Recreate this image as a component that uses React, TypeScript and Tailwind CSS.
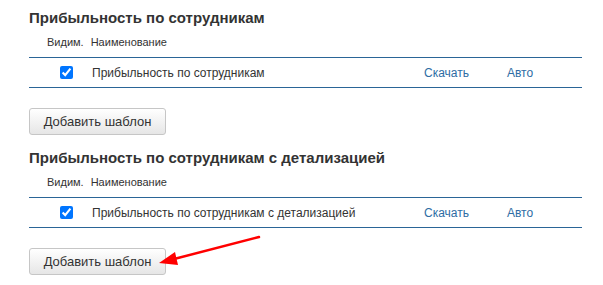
import React from "react";

function Section({ title, name, first }: { title: string; name: string; first?: boolean }) {
  return (
    <div className={first ? "pt-[8px]" : "mt-[13px]"}>
      <h2 className="text-[15px] leading-[20px] font-bold text-[#333]">{title}</h2>
      <div className="h-[29px] flex items-center text-[11px] text-[#333]">
        <span className="ml-[18px]">Видим.</span>
        <span className="ml-[7px]">Наименование</span>
      </div>
      <div className="w-[553px] h-[31px] border-y border-[#2a6597] flex items-center text-[12px] text-[#333]">
        <input type="checkbox" defaultChecked className="ml-[31px] w-[13px] h-[13px] m-0 accent-[#0075ff]" />
        <span className="ml-[19px] w-[332px]">{name}</span>
        <a className="text-[#2e6da4] w-[83px]">Скачать</a>
        <a className="text-[#2e6da4]">Авто</a>
      </div>
      <button className="mt-[20px] h-[27px] w-[137px] rounded-[3px] border border-[#c6c6c6] bg-gradient-to-b from-[#ffffff] to-[#e6e6e6] text-[13px] text-[#333] flex items-center justify-center">
        Добавить шаблон
      </button>
    </div>
  );
}

export default function App() {
  return (
    <div
      className="relative w-[603px] h-[285px] bg-white px-[29px]"
      style={{ fontFamily: '"Liberation Sans", Arial, sans-serif' }}
    >
      <Section first title="Прибыльность по сотрудникам" name="Прибыльность по сотрудникам" />
      <Section
        title="Прибыльность по сотрудникам с детализацией"
        name="Прибыльность по сотрудникам с детализацией"
      />
      <svg className="absolute left-0 top-0" width="603" height="285" viewBox="0 0 603 285">
        <line x1="259" y1="237" x2="174" y2="259" stroke="#ff0000" strokeWidth="2.5" strokeLinecap="round" />
        <polygon points="159,263 175,252 178,265" fill="#ff0000" />
      </svg>
    </div>
  );
}
